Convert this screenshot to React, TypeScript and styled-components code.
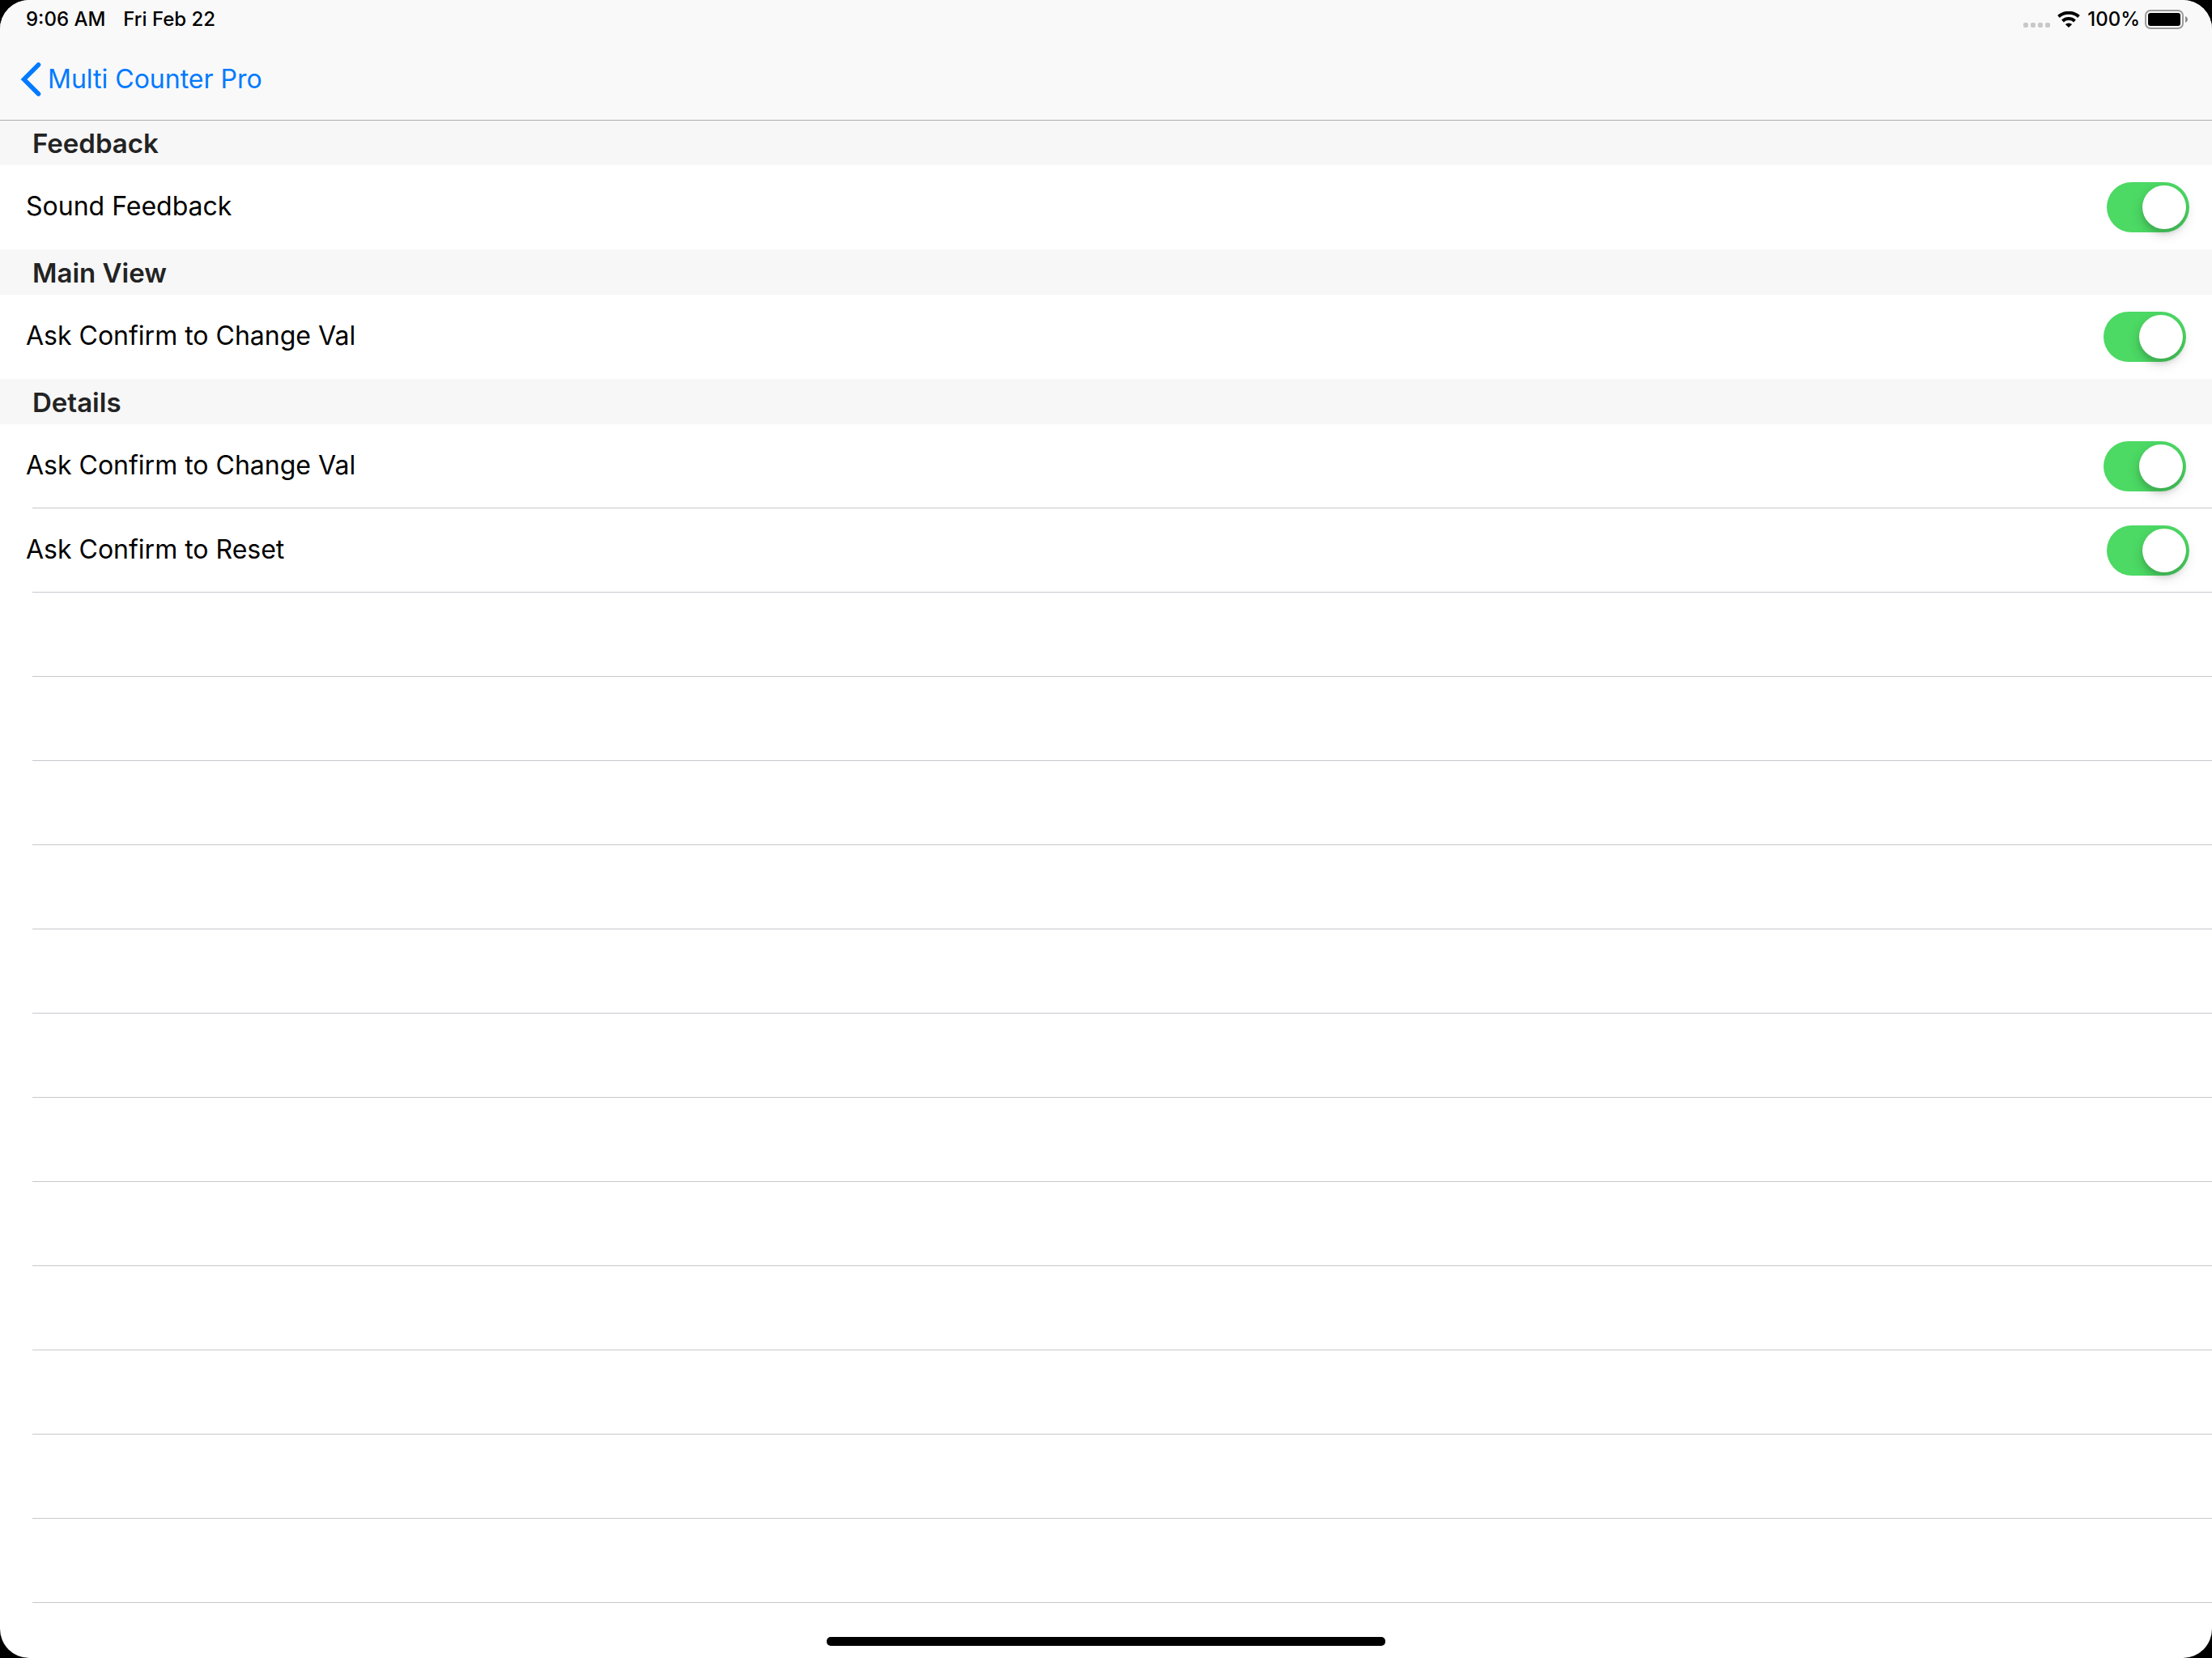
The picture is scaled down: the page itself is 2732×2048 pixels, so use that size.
import React, { useState } from 'react';
import styled, { createGlobalStyle } from 'styled-components';

const GlobalStyle = createGlobalStyle`
  * { box-sizing: border-box; }
  body {
    margin: 0;
    background: #000;
    font-family: Inter, "Liberation Sans", sans-serif;
  }
`;

const Screen = styled.div`
  display: flex;
  flex-direction: column;
  height: 100vh;
  border-radius: 36px;
  overflow: hidden;
  background: #fff;
  color: #000;
`;

const TopBar = styled.header`
  flex: none;
  position: relative;
  background: #f9f9f9;
  box-shadow: 0 1px 0 #adadad;
`;

const StatusBar = styled.div`
  display: flex;
  align-items: center;
  justify-content: space-between;
  height: 48px;
  padding: 0 30px 0 32px;
  font-size: 24px;
  line-height: 28px;
  font-weight: 500;
`;

const StatusGroup = styled.div<{ $gap: number }>`
  display: flex;
  align-items: center;
  gap: ${({ $gap }) => $gap}px;
`;

const NavBar = styled.nav`
  display: flex;
  align-items: center;
  height: 100px;
  padding: 0 25px;
`;

const BackLink = styled.a`
  display: flex;
  align-items: center;
  gap: 8px;
  color: #007aff;
  font-size: 32px;
  line-height: 40px;
  text-decoration: none;
`;

const List = styled.main`
  flex: 1;
  min-height: 0;
  overflow: hidden;
`;

const SectionTitle = styled.h2`
  margin: 0;
  padding: 9px 40px 7px;
  background: #f7f7f7;
  color: #232323;
  font-size: 33px;
  line-height: 40px;
  font-weight: 600;
`;

const Rows = styled.ul`
  margin: 0;
  padding: 0;
  list-style: none;
`;

const Row = styled.li<{ $line: boolean }>`
  display: flex;
  flex-direction: column;
  justify-content: flex-end;
  height: 104px;

  &::after {
    content: "";
    flex: none;
    display: ${({ $line }) => ($line ? 'block' : 'none')};
    height: 1px;
    margin: -1px 0 0 40px;
    background: #c8c7cc;
  }
`;

const RowLabel = styled.label<{ $end: number }>`
  display: flex;
  flex: none;
  align-items: center;
  justify-content: space-between;
  height: 104px;
  padding: 0 ${({ $end }) => $end}px 0 32px;
`;

const RowText = styled.span`
  padding-bottom: 2px;
  font-size: 32px;
  line-height: 40px;
`;

const Switch = styled.input`
  appearance: none;
  flex: none;
  display: flex;
  width: 102px;
  height: 62px;
  margin: 0;
  padding: 4px;
  border-radius: 31px;
  background: #e5e5ea;
  cursor: pointer;

  &::before {
    content: "";
    width: 54px;
    height: 54px;
    border-radius: 50%;
    background: #fff;
    box-shadow: 0 6px 16px rgba(0, 0, 0, 0.15), 0 6px 6px rgba(0, 0, 0, 0.1);
  }

  &:checked {
    justify-content: flex-end;
    background: #4cd964;
  }
`;

const HomeIndicator = styled.div`
  position: fixed;
  bottom: 15px;
  left: 50%;
  width: 690px;
  height: 11px;
  margin-left: -345px;
  border-radius: 5px;
  background: #000;
`;

const SignalDots = () => (
  <svg width="33" height="24" viewBox="0 0 33 24" fill="#c8c8c8" aria-hidden="true">
    {[0, 9, 18, 27].map((x) => (
      <rect key={x} x={x} y="16" width="6" height="6" rx="2" />
    ))}
  </svg>
);

const WifiIcon = () => (
  <svg width="28" height="20" viewBox="0 0 28 20" fill="none" stroke="#000" strokeWidth="4" aria-hidden="true">
    <path d="M1.500 6.500a19 19 0 0 1 25 0" />
    <path d="M6.500 12a11 11 0 0 1 15 0" />
    <path d="M14 20l-4.200-3.900a6 6 0 0 1 8.400 0z" fill="#000" stroke="none" />
  </svg>
);

const BatteryIcon = () => (
  <svg width="53" height="24" viewBox="0 0 53 24" aria-hidden="true">
    <rect x="1" y="1" width="46" height="22" rx="6" fill="none" stroke="#9b9b9b" strokeWidth="2" />
    <rect x="4" y="4" width="40" height="16" rx="3" />
    <path d="M50 8c4 1.600 4 6.400 0 8z" fill="#8e8e8e" />
  </svg>
);

const BackChevron = () => (
  <svg width="26" height="42" viewBox="0 0 26 42" fill="none" stroke="#007aff" strokeWidth="5.5" strokeLinecap="round" aria-hidden="true">
    <path d="M22.500 3L4.500 21l18 18" />
  </svg>
);

type Setting = { id: string; label: string; end: number };

const sections: { title: string; settings: Setting[] }[] = [
  { title: 'Feedback', settings: [{ id: 'sound', label: 'Sound Feedback', end: 28 }] },
  { title: 'Main View', settings: [{ id: 'main-change', label: 'Ask Confirm to Change Val', end: 32 }] },
  {
    title: 'Details',
    settings: [
      { id: 'detail-change', label: 'Ask Confirm to Change Val', end: 32 },
      { id: 'detail-reset', label: 'Ask Confirm to Reset', end: 28 },
    ],
  },
];

const EMPTY_ROWS = 12;

export default function App() {
  const [off, setOff] = useState<Record<string, boolean>>({});
  const toggle = (id: string) => setOff((prev) => ({ ...prev, [id]: !prev[id] }));

  return (
    <>
      <GlobalStyle />
      <Screen>
        <TopBar>
          <StatusBar>
            <StatusGroup $gap={22}>
              <span>9:06 AM</span>
              <span>Fri Feb 22</span>
            </StatusGroup>
            <StatusGroup $gap={6}>
              <StatusGroup $gap={9}>
                <SignalDots />
                <WifiIcon />
                <span>100%</span>
              </StatusGroup>
              <BatteryIcon />
            </StatusGroup>
          </StatusBar>
          <NavBar>
            <BackLink href="#">
              <BackChevron />
              <span>Multi Counter Pro</span>
            </BackLink>
          </NavBar>
        </TopBar>
        <List>
          {sections.map(({ title, settings }, index) => (
            <section key={title}>
              <SectionTitle>{title}</SectionTitle>
              <Rows>
                {settings.map(({ id, label, end }) => (
                  <Row key={id} $line={index === sections.length - 1}>
                    <RowLabel $end={end} htmlFor={id}>
                      <RowText>{label}</RowText>
                      <Switch id={id} type="checkbox" role="switch" checked={!off[id]} onChange={() => toggle(id)} />
                    </RowLabel>
                  </Row>
                ))}
              </Rows>
            </section>
          ))}
          <Rows aria-hidden="true">
            {Array.from({ length: EMPTY_ROWS }, (_, i) => (
              <Row key={i} $line />
            ))}
          </Rows>
        </List>
        <HomeIndicator />
      </Screen>
    </>
  );
}
